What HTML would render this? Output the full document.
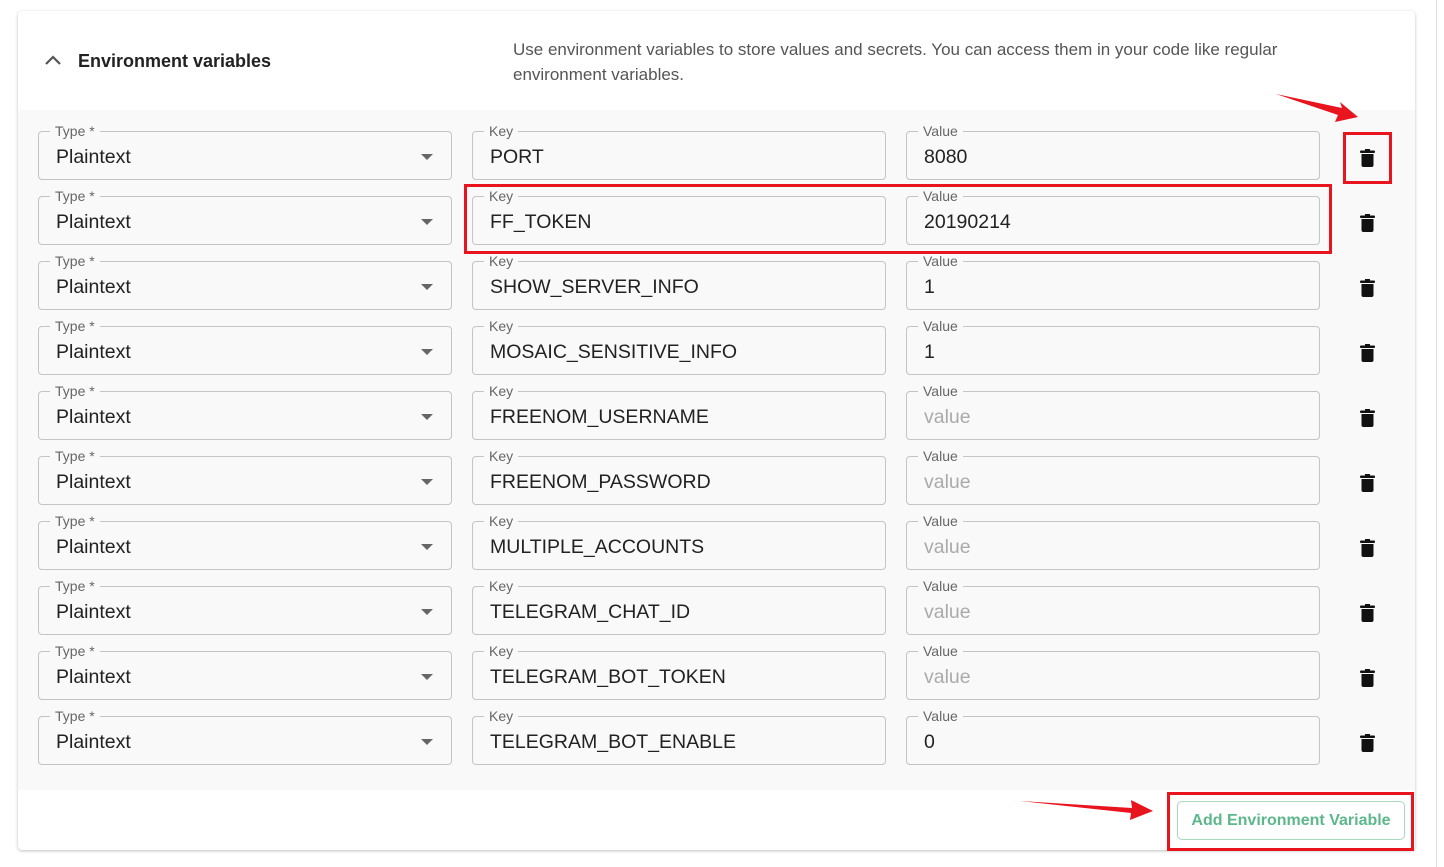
<!DOCTYPE html><html><head><style>
body{margin:0;width:1444px;height:867px;background:#fff;font-family:"Liberation Sans",sans-serif;position:relative;overflow:hidden}
.card{position:absolute;left:18px;top:11px;width:1397px;height:839px;background:#fff;border-radius:4px;box-shadow:0 1px 3px rgba(0,0,0,.25)}
.gray{position:absolute;left:18px;top:110px;width:1397px;height:680px;background:#f9f9f9}
.f{position:absolute;height:47px;width:412px;border:1px solid #c4c4c4;border-radius:4px;box-sizing:content-box}
.f .l{position:absolute;top:-10px;left:11px;padding:0 5px;background:#f9f9f9;font-size:14px;color:#666;line-height:18px}
.f .v{position:absolute;left:17px;top:13px;font-size:19.5px;color:#222;line-height:24px;letter-spacing:0}
.f .v.p{color:#aaa}
.car{position:absolute;right:18px;top:22px;width:0;height:0;border-left:6px solid transparent;border-right:6px solid transparent;border-top:6px solid #666}
.t{position:absolute;left:1360px;width:15px;height:18px}
.red{position:absolute;border:3px solid #e8141e;box-sizing:border-box}
</style></head><body>
<div class="card"></div>
<svg style="position:absolute;left:44px;top:54px" width="18" height="12"><path d="M2 10 L9 3 L16 10" stroke="#555" stroke-width="2.2" fill="none"/></svg>
<div style="position:absolute;left:78px;top:51px;font-size:18px;font-weight:bold;color:#222">Environment variables</div>
<div style="position:absolute;left:513px;top:37px;font-size:17px;color:#555;line-height:25px;width:845px">Use environment variables to store values and secrets. You can access them in your code like regular environment variables.</div>
<div class="gray"></div>
<div style="position:absolute;left:1436px;top:0;width:1px;height:867px;background:#ddd"></div>

<div class="f" style="left:38px;top:131px"><span class="l">Type *</span><span class="v">Plaintext</span><i class="car"></i></div>
<div class="f" style="left:472px;top:131px"><span class="l">Key</span><span class="v">PORT</span></div>
<div class="f" style="left:906px;top:131px"><span class="l">Value</span><span class="v">8080</span></div>
<div class="f" style="left:38px;top:196px"><span class="l">Type *</span><span class="v">Plaintext</span><i class="car"></i></div>
<div class="f" style="left:472px;top:196px"><span class="l">Key</span><span class="v">FF_TOKEN</span></div>
<div class="f" style="left:906px;top:196px"><span class="l">Value</span><span class="v">20190214</span></div>
<div class="f" style="left:38px;top:261px"><span class="l">Type *</span><span class="v">Plaintext</span><i class="car"></i></div>
<div class="f" style="left:472px;top:261px"><span class="l">Key</span><span class="v">SHOW_SERVER_INFO</span></div>
<div class="f" style="left:906px;top:261px"><span class="l">Value</span><span class="v">1</span></div>
<div class="f" style="left:38px;top:326px"><span class="l">Type *</span><span class="v">Plaintext</span><i class="car"></i></div>
<div class="f" style="left:472px;top:326px"><span class="l">Key</span><span class="v">MOSAIC_SENSITIVE_INFO</span></div>
<div class="f" style="left:906px;top:326px"><span class="l">Value</span><span class="v">1</span></div>
<div class="f" style="left:38px;top:391px"><span class="l">Type *</span><span class="v">Plaintext</span><i class="car"></i></div>
<div class="f" style="left:472px;top:391px"><span class="l">Key</span><span class="v">FREENOM_USERNAME</span></div>
<div class="f" style="left:906px;top:391px"><span class="l">Value</span><span class="v p">value</span></div>
<div class="f" style="left:38px;top:456px"><span class="l">Type *</span><span class="v">Plaintext</span><i class="car"></i></div>
<div class="f" style="left:472px;top:456px"><span class="l">Key</span><span class="v">FREENOM_PASSWORD</span></div>
<div class="f" style="left:906px;top:456px"><span class="l">Value</span><span class="v p">value</span></div>
<div class="f" style="left:38px;top:521px"><span class="l">Type *</span><span class="v">Plaintext</span><i class="car"></i></div>
<div class="f" style="left:472px;top:521px"><span class="l">Key</span><span class="v">MULTIPLE_ACCOUNTS</span></div>
<div class="f" style="left:906px;top:521px"><span class="l">Value</span><span class="v p">value</span></div>
<div class="f" style="left:38px;top:586px"><span class="l">Type *</span><span class="v">Plaintext</span><i class="car"></i></div>
<div class="f" style="left:472px;top:586px"><span class="l">Key</span><span class="v">TELEGRAM_CHAT_ID</span></div>
<div class="f" style="left:906px;top:586px"><span class="l">Value</span><span class="v p">value</span></div>
<div class="f" style="left:38px;top:651px"><span class="l">Type *</span><span class="v">Plaintext</span><i class="car"></i></div>
<div class="f" style="left:472px;top:651px"><span class="l">Key</span><span class="v">TELEGRAM_BOT_TOKEN</span></div>
<div class="f" style="left:906px;top:651px"><span class="l">Value</span><span class="v p">value</span></div>
<div class="f" style="left:38px;top:716px"><span class="l">Type *</span><span class="v">Plaintext</span><i class="car"></i></div>
<div class="f" style="left:472px;top:716px"><span class="l">Key</span><span class="v">TELEGRAM_BOT_ENABLE</span></div>
<div class="f" style="left:906px;top:716px"><span class="l">Value</span><span class="v">0</span></div>

<svg width="0" height="0" style="position:absolute"><defs><symbol id="tr" viewBox="0 0 15 18"><rect x="0" y="1.5" width="15" height="2.5" rx="1" fill="#111"/><rect x="5" y="0" width="5" height="2" fill="#111"/><path d="M1.5 5 H13.5 V16 Q13.5 18 11.5 18 H3.5 Q1.5 18 1.5 16 Z" fill="#111"/></symbol></defs></svg>
<svg class="t" style="top:149px"><use href="#tr"/></svg>
<svg class="t" style="top:214px"><use href="#tr"/></svg>
<svg class="t" style="top:279px"><use href="#tr"/></svg>
<svg class="t" style="top:344px"><use href="#tr"/></svg>
<svg class="t" style="top:409px"><use href="#tr"/></svg>
<svg class="t" style="top:474px"><use href="#tr"/></svg>
<svg class="t" style="top:539px"><use href="#tr"/></svg>
<svg class="t" style="top:604px"><use href="#tr"/></svg>
<svg class="t" style="top:669px"><use href="#tr"/></svg>
<svg class="t" style="top:734px"><use href="#tr"/></svg>

<div style="position:absolute;left:1177px;top:801px;width:226px;height:37px;border:1px solid #a8d8c0;border-radius:5px;color:#5cb88a;font-weight:bold;font-size:16px;text-align:center;line-height:38px">Add Environment Variable</div>

<div class="red" style="left:1343px;top:132px;width:49px;height:52px"></div>
<div class="red" style="left:464px;top:184px;width:868px;height:70px"></div>
<div class="red" style="left:1167px;top:792px;width:247px;height:59px"></div>
<svg style="position:absolute;left:0;top:0" width="1444" height="867">
<path d="M1276 94 L1342 108 L1340 102 L1358 117 L1335 122 L1338 115 Z" fill="#e8141e"/>
<path d="M1020 801 L1132 808 L1131 800 L1153 811 L1130 820 L1131 813 Z" fill="#e8141e"/>
</svg>
</body></html>
